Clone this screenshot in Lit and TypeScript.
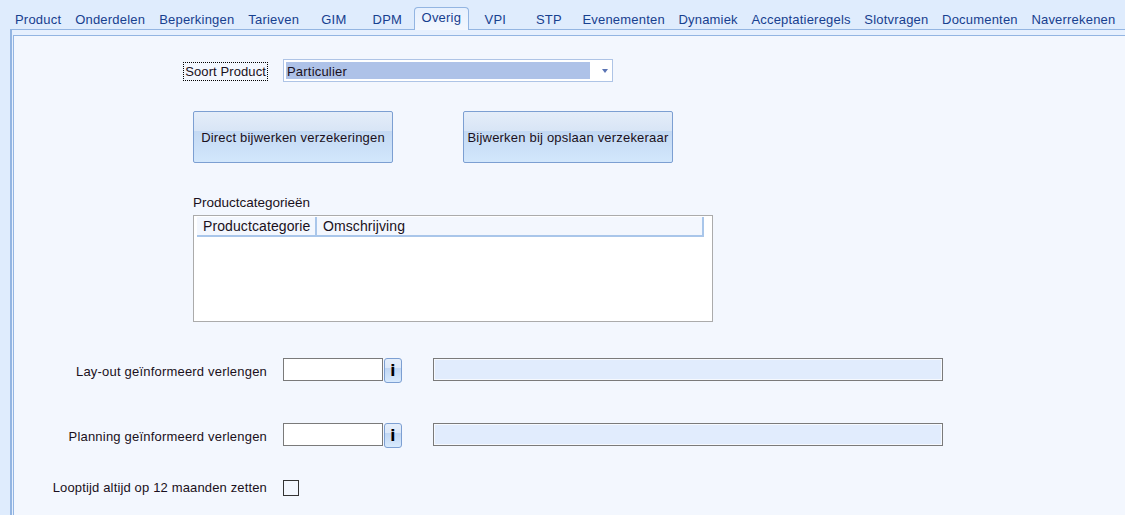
import { LitElement, html, css } from "lit";
import { customElement } from "lit/decorators.js";

const TABS = ["Product","Onderdelen","Beperkingen","Tarieven","GIM","DPM","Overig","VPI","STP","Evenementen","Dynamiek","Acceptatieregels","Slotvragen","Documenten","Naverrekenen"];

@customElement("app-root")
export class AppRoot extends LitElement {
  static styles = css`
    :host { display:block; width:1125px; height:515px; overflow:hidden; background:#dfecfd; font:13px "Liberation Sans", Arial, sans-serif; letter-spacing:.2px; color:#1a1020; }
    * { box-sizing:border-box; }
    .tabs { display:flex; align-items:flex-end; height:30px; padding-left:8px; position:relative; z-index:1; }
    .tab { min-width:53.5px; height:22px; padding:4px 7px 0; text-align:center; color:#17408f; white-space:nowrap; }
    .tab:nth-child(4) { padding-right:8px; }
    .tab:nth-child(n+10) { padding-left:6.8px; padding-right:6.8px; }
    .tab.active { height:23px; padding:2px 6.5px 0; background:linear-gradient(#e6f0fe,#f3f7fe); border:1px solid #93b5e2; border-bottom:none; border-radius:4px 4px 0 0; }
    .frame { margin-left:10px; margin-top:-1px; height:486px; border:solid #93b5e2; border-width:1px 0 0 2px; padding:5px 0 0 1px; background:#e6f0fe; }
    .panel { height:100%; background:#f3f7fe; border:solid #93b5e2; border-width:1px 0 0 1px; padding-top:23px; }
    .row { display:flex; align-items:flex-start; }
    .label { width:253px; text-align:right; flex:none; margin-right:16px; white-space:nowrap; line-height:27px; }
    .label.first { height:23px; line-height:23px; }
    .focus { display:inline-block; outline:1px dotted #000; padding:0 1px; line-height:17px; margin-top:4px; vertical-align:top; letter-spacing:.1px; }
    .combo { width:330px; height:23px; background:#fff; border:1px solid #aec4e6; padding:2px; display:flex; align-items:stretch; }
    .combo .sel { width:304px; background:#aec2e8; padding-left:1px; line-height:19px; }
    .arrow { margin:7px 0 0 12px; width:0; height:0; border:3px solid transparent; border-top:4px solid #5a74b4; border-bottom:none; }
    .buttons { display:flex; margin:29px 0 0 179px; gap:70px; }
    .btn { height:52px; border:1px solid #7c9fd2; border-radius:2px; background:linear-gradient(#e4edf9 0,#d8e5f6 38%,#c4d9f3 39%,#d2e7fc 100%); display:flex; align-items:center; justify-content:center; white-space:nowrap; }
    .b1 { width:200px; } .b2 { width:210px; }
    .cap { margin:32px 0 0 179px; height:20px; line-height:16px; font-size:13.5px; letter-spacing:0; }
    .list { margin:0 0 0 179px; width:520px; height:107px; background:#fff; border:1px solid #ababab; padding:1px 0 0 3px; }
    .hdr { display:flex; height:20px; font-size:14px; line-height:18px; width:507px; letter-spacing:.1px; }
    .hdr div { border-bottom:2px solid #a9c6ea; background:#f3f7fe; border-right:2px solid #a9c6ea; padding-left:6px; }
    .hdr .h1 { width:120px; } .hdr .h2 { flex:1; }
    .r1 { margin-top:36px; } .r2 { margin-top:38px; } .r3 { margin-top:30px; align-items:center; }
    .r3 .label { line-height:16px; letter-spacing:.15px; }
    .input { width:100px; height:23px; background:#fff; border:1px solid #7a7a7a; flex:none; }
    .info { width:18px; height:25px; margin-left:1px; flex:none; border:1px solid #7c9fd2; border-radius:3px; background:linear-gradient(#e4eefb 0,#dce8f9 38%,#c0d6f3 39%,#d8eafd 100%); display:flex; align-items:center; justify-content:center; font:bold 15px "DejaVu Sans", sans-serif; color:#000; }
    .ro { width:510px; height:23px; margin-left:31px; background:#e1ecfd; border:1px solid #7a7a7a; box-shadow:inset 0 0 0 1px #f6f9fe; flex:none; }
    .check { width:16px; height:16px; border:1px solid #333; flex:none; }
  `;
  render() {
    return html`
      <div class="tabs">
        ${TABS.map(t => html`<div class="tab ${t === "Overig" ? "active" : ""}">${t}</div>`)}
      </div>
      <div class="frame"><div class="panel">
        <div class="row">
          <div class="label first"><span class="focus">Soort Product</span></div>
          <div class="combo"><div class="sel">Particulier</div><div class="arrow"></div></div>
        </div>
        <div class="buttons">
          <div class="btn b1">Direct bijwerken verzekeringen</div>
          <div class="btn b2">Bijwerken bij opslaan verzekeraar</div>
        </div>
        <div class="cap">Productcategorieën</div>
        <div class="list"><div class="hdr"><div class="h1">Productcategorie</div><div class="h2">Omschrijving</div></div></div>
        <div class="row r1">
          <div class="label">Lay-out geïnformeerd verlengen</div>
          <div class="input"></div><div class="info">i</div><div class="ro"></div>
        </div>
        <div class="row r2">
          <div class="label">Planning geïnformeerd verlengen</div>
          <div class="input"></div><div class="info">i</div><div class="ro"></div>
        </div>
        <div class="row r3">
          <div class="label">Looptijd altijd op 12 maanden zetten</div>
          <div class="check"></div>
        </div>
      </div></div>
    `;
  }
}
